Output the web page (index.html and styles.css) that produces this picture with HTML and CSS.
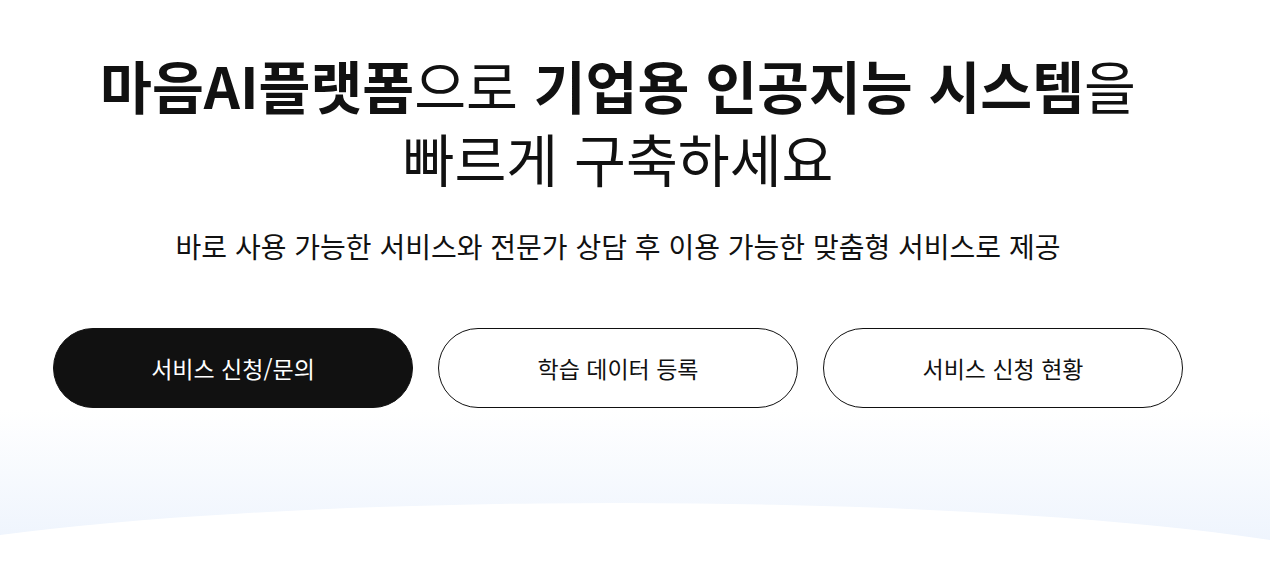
FILE: index.html
```html
<!DOCTYPE html>
<html lang="ko">
<head>
<meta charset="utf-8">
<title>마음AI플랫폼</title>
<link rel="stylesheet" href="styles.css">
</head>
<body>
<section class="hero">
  <div class="hero-inner">
    <h1 class="title"><strong>마음AI플랫폼</strong>으로 <strong>기업용 인공지능 시스템</strong>을<br>빠르게 구축하세요</h1>
    <p class="subtitle">바로 사용 가능한 서비스와 전문가 상담 후 이용 가능한 맞춤형 서비스로 제공</p>
    <div class="actions">
      <a class="btn btn-primary" href="#">서비스 신청/문의</a>
      <a class="btn btn-outline" href="#">학습 데이터 등록</a>
      <a class="btn btn-outline" href="#">서비스 신청 현황</a>
    </div>
  </div>
  <div class="curve"></div>
</section>
</body>
</html>
```
FILE: styles.css
```css
* { box-sizing: border-box; }
html, body { margin: 0; padding: 0; }
body {
  font-family: "Noto Sans CJK KR", "Noto Sans", sans-serif;
  color: #111;
  background: #fff;
}
.hero {
  position: relative;
  height: 581px;
  overflow: hidden;
  background: linear-gradient(to bottom, #ffffff 0px, #ffffff 410px, #eef4fd 545px, #eef4fd 100%);
}
.hero-inner {
  position: relative;
  z-index: 1;
  padding: 48px 34px 0 0;
  display: flex;
  flex-direction: column;
  align-items: center;
  text-align: center;
}
.title {
  margin: 0;
  font-size: 56.4px;
  line-height: 73px;
  font-weight: 400;
}
.title strong { font-weight: 700; }
.subtitle {
  margin: 33px 0 0;
  font-size: 28px;
  line-height: 38px;
  font-weight: 400;
}
.actions {
  margin-top: 63px;
  display: flex;
  gap: 25px;
}
.btn {
  width: 360px;
  height: 80px;
  border-radius: 40px;
  display: flex;
  align-items: center;
  justify-content: center;
  font-size: 23px;
  text-decoration: none;
  color: #111;
  border: 1px solid #111;
  background: #fff;
}
.btn-primary {
  background: #111;
  color: #fff;
}
.curve {
  position: absolute;
  left: -182px;
  top: 503px;
  width: 1600px;
  height: 176px;
  border-radius: 50%;
  background: #fff;
}
```
